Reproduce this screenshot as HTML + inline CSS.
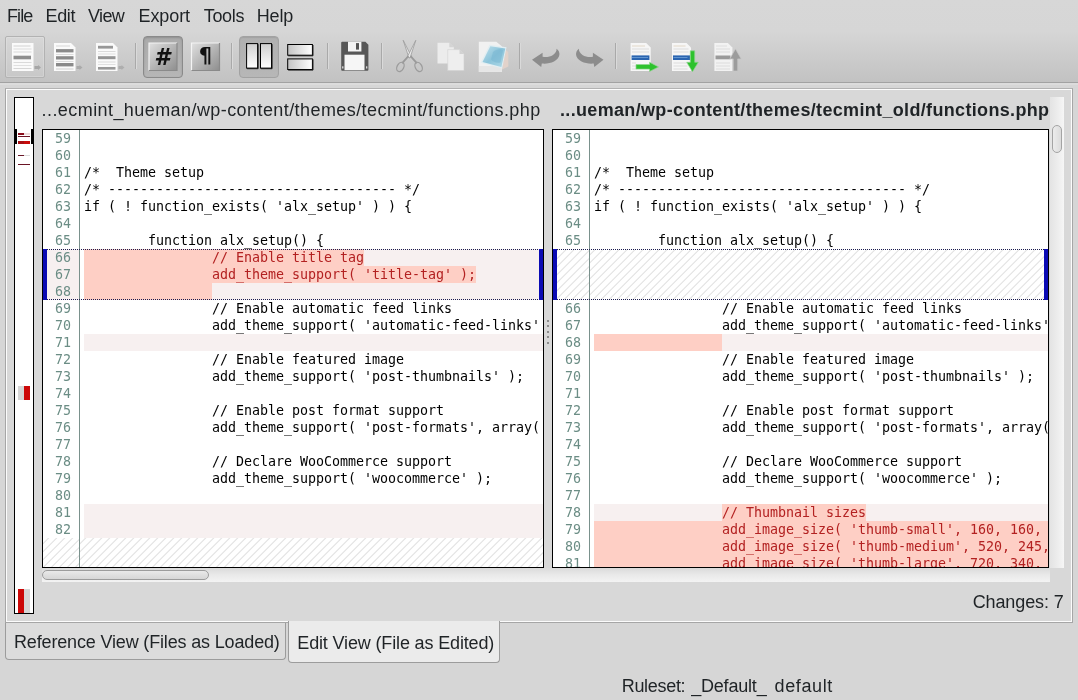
<!DOCTYPE html>
<html><head><meta charset="utf-8"><title>Diffuse-like Compare</title>
<style>
*{box-sizing:border-box;margin:0;padding:0}
html,body{width:1078px;height:700px;overflow:hidden}
body{background:#d6d6d6;font-family:"Liberation Sans","DejaVu Sans",sans-serif;font-size:18px;color:#1f2326;position:relative}
.abs{position:absolute}
#top{position:absolute;left:0;top:0;width:1078px;height:82px;background:linear-gradient(#d7d7d7 0,#d6d6d6 31px,#c2c2c2 82px)}
#topline{position:absolute;left:0;top:82px;width:1078px;height:1px;background:#a2a2a2}
#topline2{position:absolute;left:0;top:83px;width:1078px;height:2px;background:#dcdcdc}
.mi{position:absolute;top:5px;height:22px;line-height:22px;white-space:pre}
.sep{position:absolute;top:43px;width:1px;height:26px;background:#a9a9a9;box-shadow:1px 0 0 #dadada}
.tb{position:absolute}
.pressed{position:absolute;border:1px solid #8a8a8a;border-radius:4px;background:linear-gradient(#aaaaaa,#b6b6b6);box-shadow:inset 0 1px 2px rgba(0,0,0,.16)}
.pressed.p2{border-color:#a2a2a2;background:linear-gradient(#b0b0b0,#b7b7b7);box-shadow:inset 0 1px 1px rgba(0,0,0,.08)}
.focus{position:absolute;border:1px solid #b2b2b2;border-radius:2px;background:rgba(255,255,255,.08);box-shadow:inset 0 0 0 1px rgba(255,255,255,.18)}
#frame{position:absolute;left:5px;top:88px;width:1068px;height:535px;border:1px solid #a6a6a6;border-top-color:#b2b2b2;background:#d8d8d8;box-shadow:inset 1px 1px 0 #fcfcfc,inset -1px -1px 0 #fcfcfc}
#ov{position:absolute;left:14px;top:97px;width:20px;height:517px;border:1px solid #000;background:#fff}
.title{position:absolute;top:98px;height:24px;line-height:24px;white-space:pre}
.pane{position:absolute;top:129px;height:439px;border:1px solid #000;background:#fff;overflow:hidden;font-family:"DejaVu Sans Mono","Liberation Mono",monospace;font-size:13.33px;letter-spacing:-0.026px}
.pane .in{position:absolute;left:0;top:0;right:0;bottom:0;overflow:hidden}
.row{position:absolute;left:0;width:100%;height:17px;line-height:17px}
.row .g{position:absolute;left:0;top:0;width:36px;height:17px;text-align:right;padding-right:8px;color:#6b8d85;font-weight:normal;font-style:normal}
.row .c{position:absolute;left:41px;top:0;right:0;height:17px}
.row.lp .c,.row.cur .g{background:#f7f0f0}
.row.fp .c{background:#fecfc5}
.pk{position:absolute;top:0;height:17px;background:#fecfc5}
.t{position:absolute;top:0;white-space:pre;color:#000}
.t.red{color:#b32121}
.gl{position:absolute;left:36px;top:0;width:1px;height:100%;background:#7a918c}
.hatch,.hatchbox{background:repeating-linear-gradient(135deg,#fff 0,#fff 3.2px,#e6e6e6 3.7px,#e6e6e6 4.5px,#fff 5px,#fff 5.657px)}
.row.hatch .c{left:37px}
.dot{position:absolute;height:1px;background:repeating-linear-gradient(90deg,#1c1c50 0,#1c1c50 1px,transparent 1px,transparent 2px)}
.blue{position:absolute;width:4px;background:#0a0ab4}
.tab{position:absolute;white-space:pre}
.st{height:24px;line-height:24px;white-space:pre}
#app{position:absolute;left:0;top:0;width:1078px;height:700px;will-change:transform}
</style></head><body>
<div id="app">
<div id="top"></div><div id="topline"></div><div id="topline2"></div>
<span class="mi" style="left:7px;letter-spacing:-0.9px">File</span>
<span class="mi" style="left:45.5px;letter-spacing:-0.33px">Edit</span>
<span class="mi" style="left:88px;letter-spacing:-0.63px">View</span>
<span class="mi" style="left:138.5px;letter-spacing:-0.08px">Export</span>
<span class="mi" style="left:203.7px;letter-spacing:-0.3px">Tools</span>
<span class="mi" style="left:256.7px;letter-spacing:-0.13px">Help</span>
<div class="focus" style="left:5px;top:36px;width:40px;height:42px"></div>
<div class="pressed" style="left:143px;top:36px;width:40px;height:42px"></div>
<div class="pressed p2" style="left:239px;top:36px;width:40px;height:42px"></div>
<div class="sep" style="left:135px"></div><div class="sep" style="left:231px"></div><div class="sep" style="left:327px"></div>
<div class="sep" style="left:381px"></div><div class="sep" style="left:519px"></div><div class="sep" style="left:615px"></div>
<svg class="abs" style="left:0;top:0" width="1078" height="86" viewBox="0 0 1078 86">
<defs>
<linearGradient id="gbev" x1="0" y1="0" x2="1" y2="1"><stop offset="0" stop-color="#e0e0e0"/><stop offset="0.5" stop-color="#b6b6b6"/><stop offset="1" stop-color="#8e8e8e"/></linearGradient>
<linearGradient id="gcol" x1="0" y1="0" x2="0" y2="1"><stop offset="0" stop-color="#cfcfcf"/><stop offset="1" stop-color="#ffffff"/></linearGradient>
<linearGradient id="grow" x1="0" y1="0" x2="1" y2="0"><stop offset="0" stop-color="#c4c4c4"/><stop offset="1" stop-color="#ffffff"/></linearGradient>
<linearGradient id="gblue" x1="0" y1="0" x2="1" y2="1"><stop offset="0" stop-color="#bfe0ec"/><stop offset="0.5" stop-color="#8cc4da"/><stop offset="1" stop-color="#b0dae8"/></linearGradient>
</defs>
<!-- icon 1 -->
<g>
<rect x="12" y="43" width="21.5" height="28" fill="#fafafa"/>
<rect x="13.5" y="45.5" width="17" height="1" fill="#d2d2d2"/><rect x="13.5" y="48.5" width="18" height="1" fill="#dcdcdc"/>
<rect x="13.5" y="51.5" width="18" height="1" fill="#d8d8d8"/>
<rect x="13.5" y="55.7" width="17.5" height="3.6" fill="#8e8e8e"/>
<rect x="13.5" y="62" width="18" height="1" fill="#dadada"/><rect x="13.5" y="65" width="18" height="1" fill="#e0e0e0"/><rect x="13.5" y="68" width="18" height="1" fill="#d6d6d6"/>
<path d="M34.5 66h3.5v-1l3 2.5-3 2.5v-1h-3.500z" fill="#a6a6a6"/>
</g>
<!-- icon 2 -->
<g>
<path d="M54 43h17l4.500 4.500v23.500h-21.500z" fill="#fafafa"/>
<rect x="56" y="45.500" width="14" height="1" fill="#d6d6d6"/>
<rect x="56" y="49.100" width="17.500" height="3.300" fill="#8a8a8a"/>
<rect x="56" y="54" width="17.500" height="1" fill="#dcdcdc"/>
<rect x="56" y="56.200" width="17.500" height="3.300" fill="#8a8a8a"/>
<rect x="56" y="61" width="17.500" height="1" fill="#dcdcdc"/>
<rect x="56" y="63" width="17.500" height="3.400" fill="#8a8a8a"/>
<rect x="56" y="68.500" width="17.500" height="1" fill="#d0d0d0"/>
<path d="M76.500 66h3v-1l3 2.500-3 2.500v-1h-3z" fill="#aaaaaa"/>
</g>
<!-- icon 3 -->
<g>
<path d="M96 43h17l4.500 4.500v23.500h-21.500z" fill="#fafafa"/>
<rect x="98" y="45.800" width="15" height="2.800" fill="#979797"/>
<rect x="98" y="51" width="17.500" height="1" fill="#dadada"/><rect x="98" y="53.500" width="17.500" height="1" fill="#e0e0e0"/>
<rect x="98" y="56.200" width="17.500" height="3" fill="#959595"/>
<rect x="98" y="61.500" width="17.500" height="1" fill="#dadada"/><rect x="98" y="64" width="17.500" height="1" fill="#e0e0e0"/>
<rect x="98" y="67" width="17.500" height="2.600" fill="#999999"/>
<path d="M118.500 66h3v-1l3 2.500-3 2.500v-1h-3z" fill="#aeaeae"/>
</g>
<!-- # -->
<g>
<rect x="149" y="43" width="28" height="27.500" fill="url(#gbev)"/>
<path d="M149 70.500v-27.500h28" fill="none" stroke="#f4f4f4" stroke-width="1.200"/>
<path d="M149 70.500h28v-27.500" fill="none" stroke="#8a8a8a" stroke-width="1.200"/>
<text x="162" y="64.600" text-anchor="middle" font-family="'DejaVu Sans','Liberation Sans',sans-serif" font-weight="bold" font-style="italic" font-size="22.500" fill="#111">#</text>
</g>
<!-- pilcrow -->
<g>
<rect x="191.500" y="43" width="28" height="27.500" fill="url(#gbev)"/>
<path d="M191.500 70.500v-27.500h28" fill="none" stroke="#f4f4f4" stroke-width="1.200"/>
<path d="M191.500 70.500h28v-27.500" fill="none" stroke="#8a8a8a" stroke-width="1.200"/>
<text x="205.400" y="63.200" text-anchor="middle" font-family="'DejaVu Sans','Liberation Sans',sans-serif" font-weight="bold" font-size="21" fill="#111">¶</text>
</g>
<!-- columns -->
<g stroke="#000" stroke-width="1">
<rect x="246.600" y="43.600" width="11" height="24.500" fill="url(#gcol)"/>
<rect x="260.500" y="43.600" width="11" height="24.500" fill="url(#gcol)"/>
</g>
<path d="M247 68.700h11.100v-24.500M261 68.700h11.100v-24.500" fill="none" stroke="#111" stroke-width="0.900"/>
<!-- rows -->
<g stroke="#000" stroke-width="1">
<rect x="287.700" y="44.500" width="24.700" height="10.700" fill="url(#grow)"/>
<rect x="287.700" y="58.900" width="24.700" height="10.600" fill="url(#grow)"/>
</g>
<path d="M288.200 55.800h24.800v-10.800M288.200 70.100h24.800v-10.800" fill="none" stroke="#111" stroke-width="0.900"/>
<!-- floppy -->
<g>
<path d="M342.200 41.700h23.200l3 3v25.100q0 1-1 1h-25.200q-1 0-1-1v-27.100q0-1 1-1z" fill="#575757"/>
<rect x="348" y="41.700" width="13.400" height="9.800" fill="#f4f4f4"/>
<rect x="356" y="43.100" width="3" height="6.500" fill="#555"/>
<rect x="344.500" y="54.700" width="20" height="15.500" fill="#f6f6f6"/>
<rect x="342.200" y="66.300" width="1.200" height="2.200" fill="#e8e8e8"/><rect x="366.100" y="66.300" width="1.200" height="2.200" fill="#e8e8e8"/>
</g>
<!-- scissors -->
<g fill="#e8e8e8" stroke="#9c9c9c" stroke-width="0.800" stroke-linejoin="round">
<path d="M403.200 40.300L411.500 56.500L409 58Z"/>
<path d="M415.800 40.300L407.500 56.500L410 58Z"/>
<path d="M410.600 56.200L416.800 63.200M408.400 56.200L402.200 63.200" fill="none" stroke="#9a9a9a" stroke-width="1.800"/>
<ellipse cx="400.400" cy="66.900" rx="3.300" ry="4.900" transform="rotate(28 400.400 66.900)" fill="none" stroke-width="1.300"/>
<ellipse cx="418.600" cy="66.900" rx="3.300" ry="4.900" transform="rotate(-28 418.600 66.900)" fill="none" stroke-width="1.300"/>
</g>
<!-- copy -->
<g>
<path d="M437.500 42.700h11.800l4.500 4.500v16.300h-16.300z" fill="#ececec"/>
<path d="M449.300 42.700v4.500h4.500z" fill="#d4d4d4"/>
<path d="M447.700 49.600h11.800l4.500 4.500v16.900h-16.300z" fill="#eeeeee" stroke="#d2d2d2" stroke-width="0.600"/>
<path d="M459.500 49.600v4.500h4.500z" fill="#d2d2d2"/>
<path d="M447.700 70.500h16.300v0.900h-16.300z" fill="#c4c4c4"/>
</g>
<!-- paste -->
<g>
<path d="M478.800 41.700h17.500l5.500 4.500v25.700h-23z" fill="#f1f1f1"/>
<path d="M478.800 66h23v5.900h-23z" fill="#e6e6e6"/>
<path d="M505.500 50l2.800 2v14.500l-6.300 3z" fill="#e2d2ca"/>
<path d="M489.500 44.800l17 2.400-4.300 21.400-21.700-5.800z" fill="#e2eef2"/>
<path d="M490.300 46.300l15 2.100-3.900 18.600-18.900-5z" fill="url(#gblue)"/>
<path d="M493 52c3-3 8-3.500 10-1.500l-2.500 12c-4 1-8-1-9.500-3z" fill="#78b6d2" opacity="0.550"/>
</g>
<!-- undo -->
<path id="undo" d="M556.5 48.800C561 52 560.500 58 554 61.600C550.500 63.400 546 64 541.800 63.600L541.200 67L532 59.800L542.600 52.800L542.600 56.800C546 57.400 550 57 553 55C555.500 53.300 556.800 51 556.500 48.800Z" fill="#8c8c8c"/>
<!-- redo -->
<path d="M556.5 48.800C561 52 560.500 58 554 61.600C550.500 63.400 546 64 541.800 63.600L541.200 67L532 59.800L542.600 52.800L542.600 56.800C546 57.400 550 57 553 55C555.500 53.300 556.800 51 556.500 48.800Z" fill="#8c8c8c" transform="translate(1135.500 0) scale(-1 1)"/>
<!-- merge right -->
<g>
<path d="M630.600 43h15.600l4.500 4.500v23.500h-20.100z" fill="#f6f6f6"/>
<rect x="632" y="45.500" width="13" height="1" fill="#e2d8c8"/><rect x="632" y="48.500" width="17" height="1" fill="#dcdcdc"/><rect x="632" y="51.500" width="17" height="1" fill="#dcdcdc"/>
<rect x="631.600" y="55.400" width="17.800" height="4.600" fill="#2a64b0"/>
<rect x="632" y="57.200" width="16" height="0.800" fill="#6ea0d8"/>
<rect x="632" y="62.500" width="4" height="1" fill="#dcdcdc"/><rect x="632" y="65.500" width="4" height="1" fill="#dcdcdc"/><rect x="632" y="68.500" width="4" height="1" fill="#dcdcdc"/>
<path d="M636 64.500h13.500v-2.300l9 4.700-9 4.600v-2.400h-13.500z" fill="#2ec22e" stroke="#8fd48f" stroke-width="0.700"/>
</g>
<!-- merge down -->
<g>
<path d="M672 43h14.500l4.500 4.500v23.500h-19z" fill="#f6f6f6"/>
<rect x="673.500" y="45.500" width="12" height="1" fill="#e2d8c8"/><rect x="673.500" y="48.500" width="15" height="1" fill="#dcdcdc"/><rect x="673.500" y="51.500" width="15" height="1" fill="#dcdcdc"/>
<rect x="673" y="55.400" width="17" height="4.600" fill="#2a64b0"/>
<rect x="673.500" y="57.200" width="14" height="0.800" fill="#6ea0d8"/>
<rect x="673.500" y="62.500" width="14" height="1" fill="#dcdcdc"/><rect x="673.500" y="65.500" width="14" height="1" fill="#dcdcdc"/><rect x="673.500" y="68.500" width="14" height="1" fill="#dcdcdc"/>
<path d="M690.300 50.800h4.400v11.500h3.600l-5.800 9.500-5.800-9.500h3.600z" fill="#2ec22e" stroke="#8fd48f" stroke-width="0.700"/>
</g>
<!-- merge up (disabled) -->
<g>
<path d="M714.400 43h13.500l4.500 4.500v23.500h-18z" fill="#f2f2f2"/>
<rect x="716" y="45.500" width="11" height="1" fill="#dedede"/><rect x="716" y="48.500" width="14" height="1" fill="#dcdcdc"/><rect x="716" y="51.500" width="14" height="1" fill="#dcdcdc"/>
<rect x="715.500" y="55.500" width="15" height="3.800" fill="#9a9a9a"/>
<rect x="716" y="62.500" width="14" height="1" fill="#dcdcdc"/><rect x="716" y="65.500" width="14" height="1" fill="#dcdcdc"/><rect x="716" y="68.500" width="14" height="1" fill="#dcdcdc"/>
<path d="M735.500 48.900l5.700 10h-3.500v12.100h-4.400v-12.100h-3.500z" fill="#9c9c9c" stroke="#c4c4c4" stroke-width="0.700"/>
</g>
</svg>

<div id="frame"></div>
<div id="ov">
<i class="abs" style="left:-1px;top:31px;width:3px;height:15px;background:#000"></i>
<i class="abs" style="right:-1px;top:31px;width:3px;height:15px;background:#000"></i>
<i class="abs" style="left:3px;top:35px;width:6px;height:2px;background:#8a0c1a"></i><i class="abs" style="left:9px;top:35px;width:6px;height:2px;background:#ecdcdc"></i>
<i class="abs" style="left:3px;top:38px;width:12px;height:1px;background:#6a1424"></i>
<i class="abs" style="left:3px;top:43px;width:6px;height:3px;background:#a80e12"></i><i class="abs" style="left:9px;top:43px;width:6px;height:3px;background:#c80c0c"></i>
<i class="abs" style="left:3px;top:57px;width:6px;height:1px;background:#6a1828"></i><i class="abs" style="left:9px;top:57px;width:6px;height:1px;background:#dcdcdc"></i>
<i class="abs" style="left:3px;top:66px;width:12px;height:1px;background:#6a1424"></i>
<i class="abs" style="left:3px;top:288px;width:6px;height:14px;background:#d6d6d6"></i><i class="abs" style="left:9px;top:288px;width:6px;height:14px;background:#cc0808"></i>
<i class="abs" style="left:3px;top:491px;width:6px;height:24px;background:#cc0808"></i><i class="abs" style="left:9px;top:491px;width:6px;height:24px;background:#d6d6d6"></i>

</div>
<div class="title" style="left:41.6px;letter-spacing:0.425px">...ecmint_hueman/wp-content/themes/tecmint/functions.php</div>
<div class="title" style="left:560px;font-weight:bold;letter-spacing:0.335px">...ueman/wp-content/themes/tecmint_old/functions.php</div>
<div class="pane" style="left:42px;width:502px"><div class="in">
<div class="row" style="top:0px"><b class="g">59</b><div class="c"></div></div>
<div class="row" style="top:17px"><b class="g">60</b><div class="c"></div></div>
<div class="row" style="top:34px"><b class="g">61</b><div class="c"><span class="t" style="left:0px">/*  Theme setup</span></div></div>
<div class="row" style="top:51px"><b class="g">62</b><div class="c"><span class="t" style="left:0px">/* ------------------------------------ */</span></div></div>
<div class="row" style="top:68px"><b class="g">63</b><div class="c"><span class="t" style="left:0px">if ( ! function_exists( 'alx_setup' ) ) {</span></div></div>
<div class="row" style="top:85px"><b class="g">64</b><div class="c"></div></div>
<div class="row" style="top:102px"><b class="g">65</b><div class="c"><span class="t" style="left:64px">function alx_setup() {</span></div></div>
<div class="row lp cur" style="top:119px"><b class="g">66</b><div class="c"><i class="pk" style="left:0;width:280px"></i><span class="t red" style="left:128px">// Enable title tag</span></div></div>
<div class="row lp cur" style="top:136px"><b class="g">67</b><div class="c"><i class="pk" style="left:0;width:392px"></i><span class="t red" style="left:128px">add_theme_support( 'title-tag' );</span></div></div>
<div class="row lp cur" style="top:153px"><b class="g">68</b><div class="c"><i class="pk" style="left:0;width:128px"></i></div></div>
<div class="row" style="top:170px"><b class="g">69</b><div class="c"><span class="t" style="left:128px">// Enable automatic feed links</span></div></div>
<div class="row" style="top:187px"><b class="g">70</b><div class="c"><span class="t" style="left:128px">add_theme_support( 'automatic-feed-links' );</span></div></div>
<div class="row lp" style="top:204px"><b class="g">71</b><div class="c"></div></div>
<div class="row" style="top:221px"><b class="g">72</b><div class="c"><span class="t" style="left:128px">// Enable featured image</span></div></div>
<div class="row" style="top:238px"><b class="g">73</b><div class="c"><span class="t" style="left:128px">add_theme_support( 'post-thumbnails' );</span></div></div>
<div class="row" style="top:255px"><b class="g">74</b><div class="c"></div></div>
<div class="row" style="top:272px"><b class="g">75</b><div class="c"><span class="t" style="left:128px">// Enable post format support</span></div></div>
<div class="row" style="top:289px"><b class="g">76</b><div class="c"><span class="t" style="left:128px">add_theme_support( 'post-formats', array( 'audio', 'aside' ) );</span></div></div>
<div class="row" style="top:306px"><b class="g">77</b><div class="c"></div></div>
<div class="row" style="top:323px"><b class="g">78</b><div class="c"><span class="t" style="left:128px">// Declare WooCommerce support</span></div></div>
<div class="row" style="top:340px"><b class="g">79</b><div class="c"><span class="t" style="left:128px">add_theme_support( 'woocommerce' );</span></div></div>
<div class="row" style="top:357px"><b class="g">80</b><div class="c"></div></div>
<div class="row lp" style="top:374px"><b class="g">81</b><div class="c"></div></div>
<div class="row lp" style="top:391px"><b class="g">82</b><div class="c"></div></div>
<div class="hatchbox" style="position:absolute;left:0;top:408px;width:36px;height:30px"></div>
<div class="hatchbox" style="position:absolute;left:37px;top:408px;right:0;height:30px"></div>
<div class="gl"></div>
<div class="dot" style="left:0;right:0;top:119px"></div>
<div class="dot" style="left:0;right:0;top:169px"></div>
<div class="blue" style="left:0;top:119px;height:51px"></div>
<div class="blue" style="right:0;top:119px;height:51px"></div>
</div></div>
<div class="pane" style="left:552px;width:497px"><div class="in">
<div class="row" style="top:0px"><b class="g">59</b><div class="c"></div></div>
<div class="row" style="top:17px"><b class="g">60</b><div class="c"></div></div>
<div class="row" style="top:34px"><b class="g">61</b><div class="c"><span class="t" style="left:0px">/*  Theme setup</span></div></div>
<div class="row" style="top:51px"><b class="g">62</b><div class="c"><span class="t" style="left:0px">/* ------------------------------------ */</span></div></div>
<div class="row" style="top:68px"><b class="g">63</b><div class="c"><span class="t" style="left:0px">if ( ! function_exists( 'alx_setup' ) ) {</span></div></div>
<div class="row" style="top:85px"><b class="g">64</b><div class="c"></div></div>
<div class="row" style="top:102px"><b class="g">65</b><div class="c"><span class="t" style="left:64px">function alx_setup() {</span></div></div>
<div class="row" style="top:119px"><b class="g"></b><div class="c"></div></div>
<div class="row" style="top:136px"><b class="g"></b><div class="c"></div></div>
<div class="row" style="top:153px"><b class="g"></b><div class="c"></div></div>
<div class="row" style="top:170px"><b class="g">66</b><div class="c"><span class="t" style="left:128px">// Enable automatic feed links</span></div></div>
<div class="row" style="top:187px"><b class="g">67</b><div class="c"><span class="t" style="left:128px">add_theme_support( 'automatic-feed-links' );</span></div></div>
<div class="row lp" style="top:204px"><b class="g">68</b><div class="c"><i class="pk" style="left:0;width:128px"></i></div></div>
<div class="row" style="top:221px"><b class="g">69</b><div class="c"><span class="t" style="left:128px">// Enable featured image</span></div></div>
<div class="row" style="top:238px"><b class="g">70</b><div class="c"><span class="t" style="left:128px">add_theme_support( 'post-thumbnails' );</span></div></div>
<div class="row" style="top:255px"><b class="g">71</b><div class="c"></div></div>
<div class="row" style="top:272px"><b class="g">72</b><div class="c"><span class="t" style="left:128px">// Enable post format support</span></div></div>
<div class="row" style="top:289px"><b class="g">73</b><div class="c"><span class="t" style="left:128px">add_theme_support( 'post-formats', array( 'audio', 'aside' ) );</span></div></div>
<div class="row" style="top:306px"><b class="g">74</b><div class="c"></div></div>
<div class="row" style="top:323px"><b class="g">75</b><div class="c"><span class="t" style="left:128px">// Declare WooCommerce support</span></div></div>
<div class="row" style="top:340px"><b class="g">76</b><div class="c"><span class="t" style="left:128px">add_theme_support( 'woocommerce' );</span></div></div>
<div class="row" style="top:357px"><b class="g">77</b><div class="c"></div></div>
<div class="row lp" style="top:374px"><b class="g">78</b><div class="c"><i class="pk" style="left:128px;width:144px"></i><span class="t red" style="left:128px">// Thumbnail sizes</span></div></div>
<div class="row fp" style="top:391px"><b class="g">79</b><div class="c"><span class="t red" style="left:128px">add_image_size( 'thumb-small', 160, 160, true );</span></div></div>
<div class="row fp" style="top:408px"><b class="g">80</b><div class="c"><span class="t red" style="left:128px">add_image_size( 'thumb-medium', 520, 245, true );</span></div></div>
<div class="row fp" style="top:425px"><b class="g">81</b><div class="c"><span class="t red" style="left:128px">add_image_size( 'thumb-large', 720, 340, true );</span></div></div>
<div class="hatchbox" style="position:absolute;left:0;top:119px;width:36px;height:51px"></div>
<div class="hatchbox" style="position:absolute;left:37px;top:119px;right:0;height:51px"></div>
<div class="gl"></div>
<div class="dot" style="left:0;right:0;top:119px"></div>
<div class="dot" style="left:0;right:0;top:169px"></div>
<div class="blue" style="left:0;top:119px;height:51px"></div>
<div class="blue" style="right:0;top:119px;height:51px"></div>
</div></div>
<!-- splitter handle -->
<div class="abs" style="left:547px;top:320px;width:2px;height:25px;background:repeating-linear-gradient(#8c8c8c 0,#8c8c8c 2px,transparent 2px,transparent 5.5px)"></div>
<!-- h scrollbars -->
<div class="abs" style="left:42px;top:568px;width:1008px;height:14px;background:linear-gradient(#dadada,#e8e8e8 45%,#f3f3f3)"></div>
<div class="abs" style="left:42px;top:570px;width:167px;height:10px;border:1px solid #9c9c9c;border-radius:5px;background:linear-gradient(#e9e9e9,#d6d6d6)"></div>
<!-- v scrollbar -->
<div class="abs" style="left:1050px;top:97px;width:14px;height:471px;background:linear-gradient(90deg,#e4e4e4,#e6e6e6 15%,#eeeeee 60%,#f6f6f6)"></div>
<div class="abs" style="left:1052px;top:125px;width:10px;height:28px;border:1px solid #a4a4a4;border-radius:5px;background:linear-gradient(90deg,#ececec,#dcdcdc)"></div>
<div class="abs" style="left:972.7px;top:590px;height:24px;line-height:24px;white-space:pre;letter-spacing:-0.12px">Changes: 7</div>
<!-- tabs -->
<div class="abs" style="left:5px;top:623px;width:281px;height:37px;border:1px solid #9c9c9c;border-top:none;border-radius:0 0 4px 4px;background:#dcdcdc"></div>
<div class="tab" style="left:14px;top:630px;height:24px;line-height:24px;letter-spacing:-0.16px">Reference View (Files as Loaded)</div>
<div class="abs" style="left:288px;top:621px;width:212px;height:42px;border:1px solid #9c9c9c;border-top:none;border-radius:0 0 4px 4px;background:#ebebeb"></div>
<div class="tab" style="left:297.3px;top:631px;height:24px;line-height:24px;letter-spacing:-0.15px">Edit View (File as Edited)</div>
<div class="abs st" style="left:621.7px;top:674px;letter-spacing:-0.3px">Ruleset:</div><div class="abs st" style="left:691.2px;top:674px;letter-spacing:-0.2px">_Default_</div><div class="abs st" style="left:774.6px;top:674px;letter-spacing:0.6px">default</div>
</div>
</body></html>
